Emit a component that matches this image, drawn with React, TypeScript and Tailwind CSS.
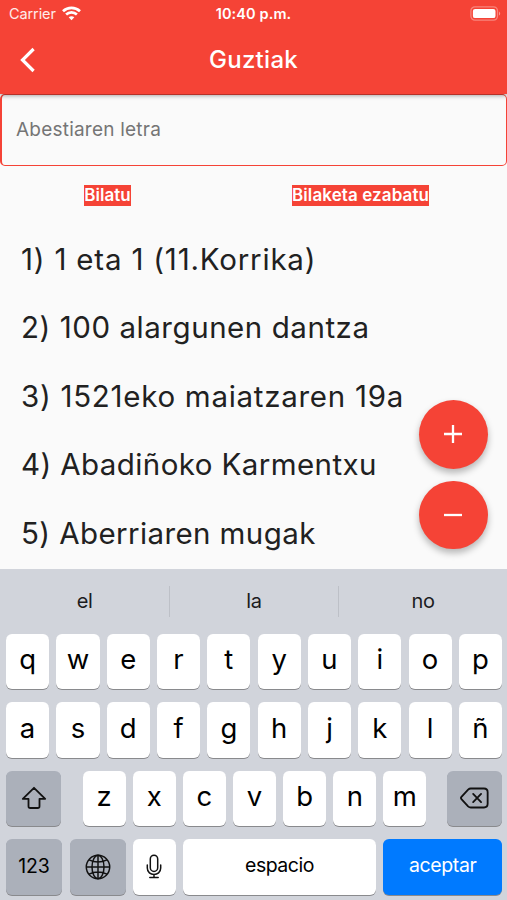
import React from 'react';

const songs = [
  { title: '1) 1 eta 1 (11.Korrika)', tracking: 'tracking-[0.8px]' },
  { title: '2) 100 alargunen dantza', tracking: 'tracking-[0.55px]' },
  { title: '3) 1521eko maiatzaren 19a', tracking: 'tracking-[0.72px]' },
  { title: '4) Abadiñoko Karmentxu', tracking: 'tracking-[0.41px]' },
  { title: '5) Aberriaren mugak', tracking: 'tracking-[0.4px]' },
];

const suggestions = ['el', 'la', 'no'];
const topRow = ['q', 'w', 'e', 'r', 't', 'y', 'u', 'i', 'o', 'p'];
const middleRow = ['a', 's', 'd', 'f', 'g', 'h', 'j', 'k', 'l', 'ñ'];
const bottomRow = ['z', 'x', 'c', 'v', 'b', 'n', 'm'];

interface KeyProps {
  children: React.ReactNode;
  className?: string;
}

function Key({ children, className = 'w-[43.2px] bg-white text-[27.5px] pb-[3px]' }: KeyProps) {
  return (
    <button
      type="button"
      className={`flex h-[55.5px] shrink-0 items-center justify-center rounded-[6px] text-black shadow-[0_1px_0.5px_#898a8d] ${className}`}
    >
      {children}
    </button>
  );
}

function StatusBar() {
  return (
    <div className="grid h-7 grid-cols-3 items-center text-[14.5px] leading-none">
      <div className="flex items-center gap-1.5 pl-[9px] text-white/90">
        <span className="tracking-[-0.1px]">Carrier</span>
        <svg width="19" height="15" viewBox="0 0 19 15" fill="none" stroke="#fff" strokeWidth="2.7" className="relative -top-px">
          <path d="M1 5.2C5.8.7 13.2.7 18 5.2" />
          <path d="M4.1 8.6c3.1-2.9 7.7-2.9 10.8 0" />
          <path d="M9.5 14.2 6.7 11.3c1.6-1.4 4-1.4 5.6 0z" fill="#fff" stroke="none" />
        </svg>
      </div>
      <span className="text-center font-semibold tracking-[0.1px] whitespace-nowrap">10:40 p.m.</span>
      <div className="flex justify-end pr-[6px]">
        <svg width="31" height="15" viewBox="0 0 31 15" className="relative -top-px">
          <rect x="0.9" y="0.9" width="26.6" height="13.2" rx="4" fill="none" stroke="#fff" strokeOpacity="0.35" strokeWidth="1.3" />
          <rect x="2.9" y="2.9" width="22.6" height="9.2" rx="2.2" fill="#fff" />
          <path d="M29 5.4c1.6.8 1.6 3.4 0 4.2z" fill="#fff" fillOpacity="0.45" />
        </svg>
      </div>
    </div>
  );
}

function Header() {
  return (
    <header className="relative z-10 h-[94px] bg-[#f54336] text-white shadow-[0_1px_5px_rgba(0,0,0,0.45)]">
      <StatusBar />
      <div className="grid h-[63px] grid-cols-[60px_1fr_60px] items-center">
        <button type="button" aria-label="Atzera" className="pl-[19px]">
          <svg width="18" height="26" viewBox="0 0 18 26" fill="none" stroke="#fff" strokeWidth="3.2">
            <path d="M14.6 2 3.5 13l11.1 11" />
          </svg>
        </button>
        <h1 className="text-center text-[24px] font-medium tracking-[0.3px]">Guztiak</h1>
      </div>
    </header>
  );
}

function Keyboard() {
  return (
    <div className="h-[331px] bg-[#d1d4db]">
      {/* Suggestions */}
      <div className="flex h-[64.5px] items-center text-[20px] text-[#1c1c1e]">
        {suggestions.map((word, i) => (
          <React.Fragment key={word}>
            {i > 0 && <span className="h-[31px] w-px bg-[#bdc0c7]" />}
            <span className="w-[168px] text-center tracking-[-0.4px] first:w-[169px]">{word}</span>
          </React.Fragment>
        ))}
      </div>

      <div className="flex flex-col gap-[13px] pr-[5px] pl-[6px]">
        <div className="flex justify-between">
          {topRow.map(letter => <Key key={letter}>{letter}</Key>)}
        </div>
        <div className="flex justify-between">
          {middleRow.map(letter => <Key key={letter}>{letter}</Key>)}
        </div>
        <div className="flex justify-between">
          <Key className="w-[55px] bg-[#abb0ba]">
            <svg width="26" height="24" viewBox="0 0 26 24" fill="none" stroke="#111" strokeWidth="1.8" strokeLinejoin="round">
              <path d="M13 1.8 1.8 12.8h5.7v7.4q0 1.8 1.8 1.8h7.4q1.8 0 1.8-1.8v-7.4h5.7z" />
            </svg>
          </Key>
          <div className="flex gap-[6.95px] pl-px">
            {bottomRow.map(letter => <Key key={letter}>{letter}</Key>)}
          </div>
          <Key className="w-[55px] bg-[#abb0ba]">
            <svg width="29" height="22" viewBox="0 0 30 22" fill="none" stroke="#111" strokeWidth="1.9" strokeLinejoin="round" strokeLinecap="round">
              <path d="M11.2 1.2h13.6q3.8 0 3.8 3.8v12q0 3.8-3.8 3.8H11.2q-1.6 0-2.8-1.2L1.5 12.1q-1-1.1 0-2.2l6.9-7.5q1.2-1.2 2.8-1.2z" />
              <path d="m13.6 6.8 8.2 8.4M21.8 6.8l-8.2 8.4" />
            </svg>
          </Key>
        </div>
        <div className="flex">
          <Key className="w-14 bg-[#abb0ba] text-[19.5px] tracking-[-0.1px]">123</Key>
          <Key className="ml-2 w-14 bg-[#abb0ba]">
            <svg width="26" height="26" viewBox="0 0 26 26" fill="none" stroke="#111" strokeWidth="1.5">
              <circle cx="13" cy="13" r="11.7" />
              <ellipse cx="13" cy="13" rx="6" ry="11.7" />
              <path d="M13 1.3v23.4M1.3 13h23.4M4 5.8q9 4.4 18 0M4 20.2q9-4.4 18 0" />
            </svg>
          </Key>
          <Key className="ml-[6.7px] w-[43px] bg-white">
            <svg width="16" height="25" viewBox="0 0 16 25" fill="none" stroke="#111" strokeWidth="1.5" strokeLinecap="round">
              <rect x="4.3" y="1.2" width="7.4" height="16.2" rx="3.7" />
              <path d="M1.3 11v3c0 8.6 13.4 8.6 13.4 0v-3M8 20.5v3M3.8 23.6h8.4" />
            </svg>
          </Key>
          <Key className="ml-[7.3px] w-[193px] bg-white pb-0.5 text-[19.5px] tracking-[-0.5px]">espacio</Key>
          <Key className="ml-[7.5px] w-[118.5px] bg-[#007aff] pb-0.5 text-[19.5px] tracking-[-0.4px]">
            <span className="text-white">aceptar</span>
          </Key>
        </div>
      </div>
    </div>
  );
}

export default function App() {
  return (
    <div className="flex h-[900px] w-[507px] flex-col overflow-hidden bg-[#fafafa] font-[Inter,sans-serif]">
      <Header />

      <main className="relative h-[475px]">
        <div className="h-[72px] rounded-[5px] border border-l-2 border-[#f54336]">
          <input
            type="text"
            placeholder="Abestiaren letra"
            className="block h-[68px] w-full bg-transparent pr-4 pl-3.5 text-[19px] tracking-[0.22px] outline-none placeholder:text-[#757575]"
          />
        </div>

        <div className="grid grid-cols-[215px_1fr] pt-[19px] text-[17px] leading-[20.5px] font-semibold text-white">
          <button type="button" className="justify-self-center bg-[#f54336]">Bilatu</button>
          <button type="button" className="ml-[77px] justify-self-start bg-[#f54336] tracking-[0.1px]">Bilaketa ezabatu</button>
        </div>

        <ul className="pt-[19px] pl-[21px] text-[29.5px] text-[#212121]">
          {songs.map(song => (
            <li key={song.title} className={`flex h-[68.5px] items-center whitespace-nowrap ${song.tracking}`}>
              {song.title}
            </li>
          ))}
        </ul>

        {/* Zoom buttons float over the list */}
        <div className="absolute right-[19.5px] bottom-5 flex flex-col gap-3">
          <button type="button" aria-label="Handitu" className="flex size-[68.5px] items-center justify-center rounded-full bg-[#f54336] shadow-[0_4px_7px_rgba(0,0,0,0.28)]">
            <svg width="18" height="18" viewBox="0 0 18 18" stroke="#fff" strokeWidth="2.3">
              <path d="M9 0v18M0 9h18" />
            </svg>
          </button>
          <button type="button" aria-label="Txikitu" className="flex size-[68.5px] items-center justify-center rounded-full bg-[#f54336] shadow-[0_4px_7px_rgba(0,0,0,0.28)]">
            <svg width="18" height="18" viewBox="0 0 18 18" stroke="#fff" strokeWidth="2.3">
              <path d="M0 9h18" />
            </svg>
          </button>
        </div>
      </main>

      <Keyboard />
    </div>
  );
}
